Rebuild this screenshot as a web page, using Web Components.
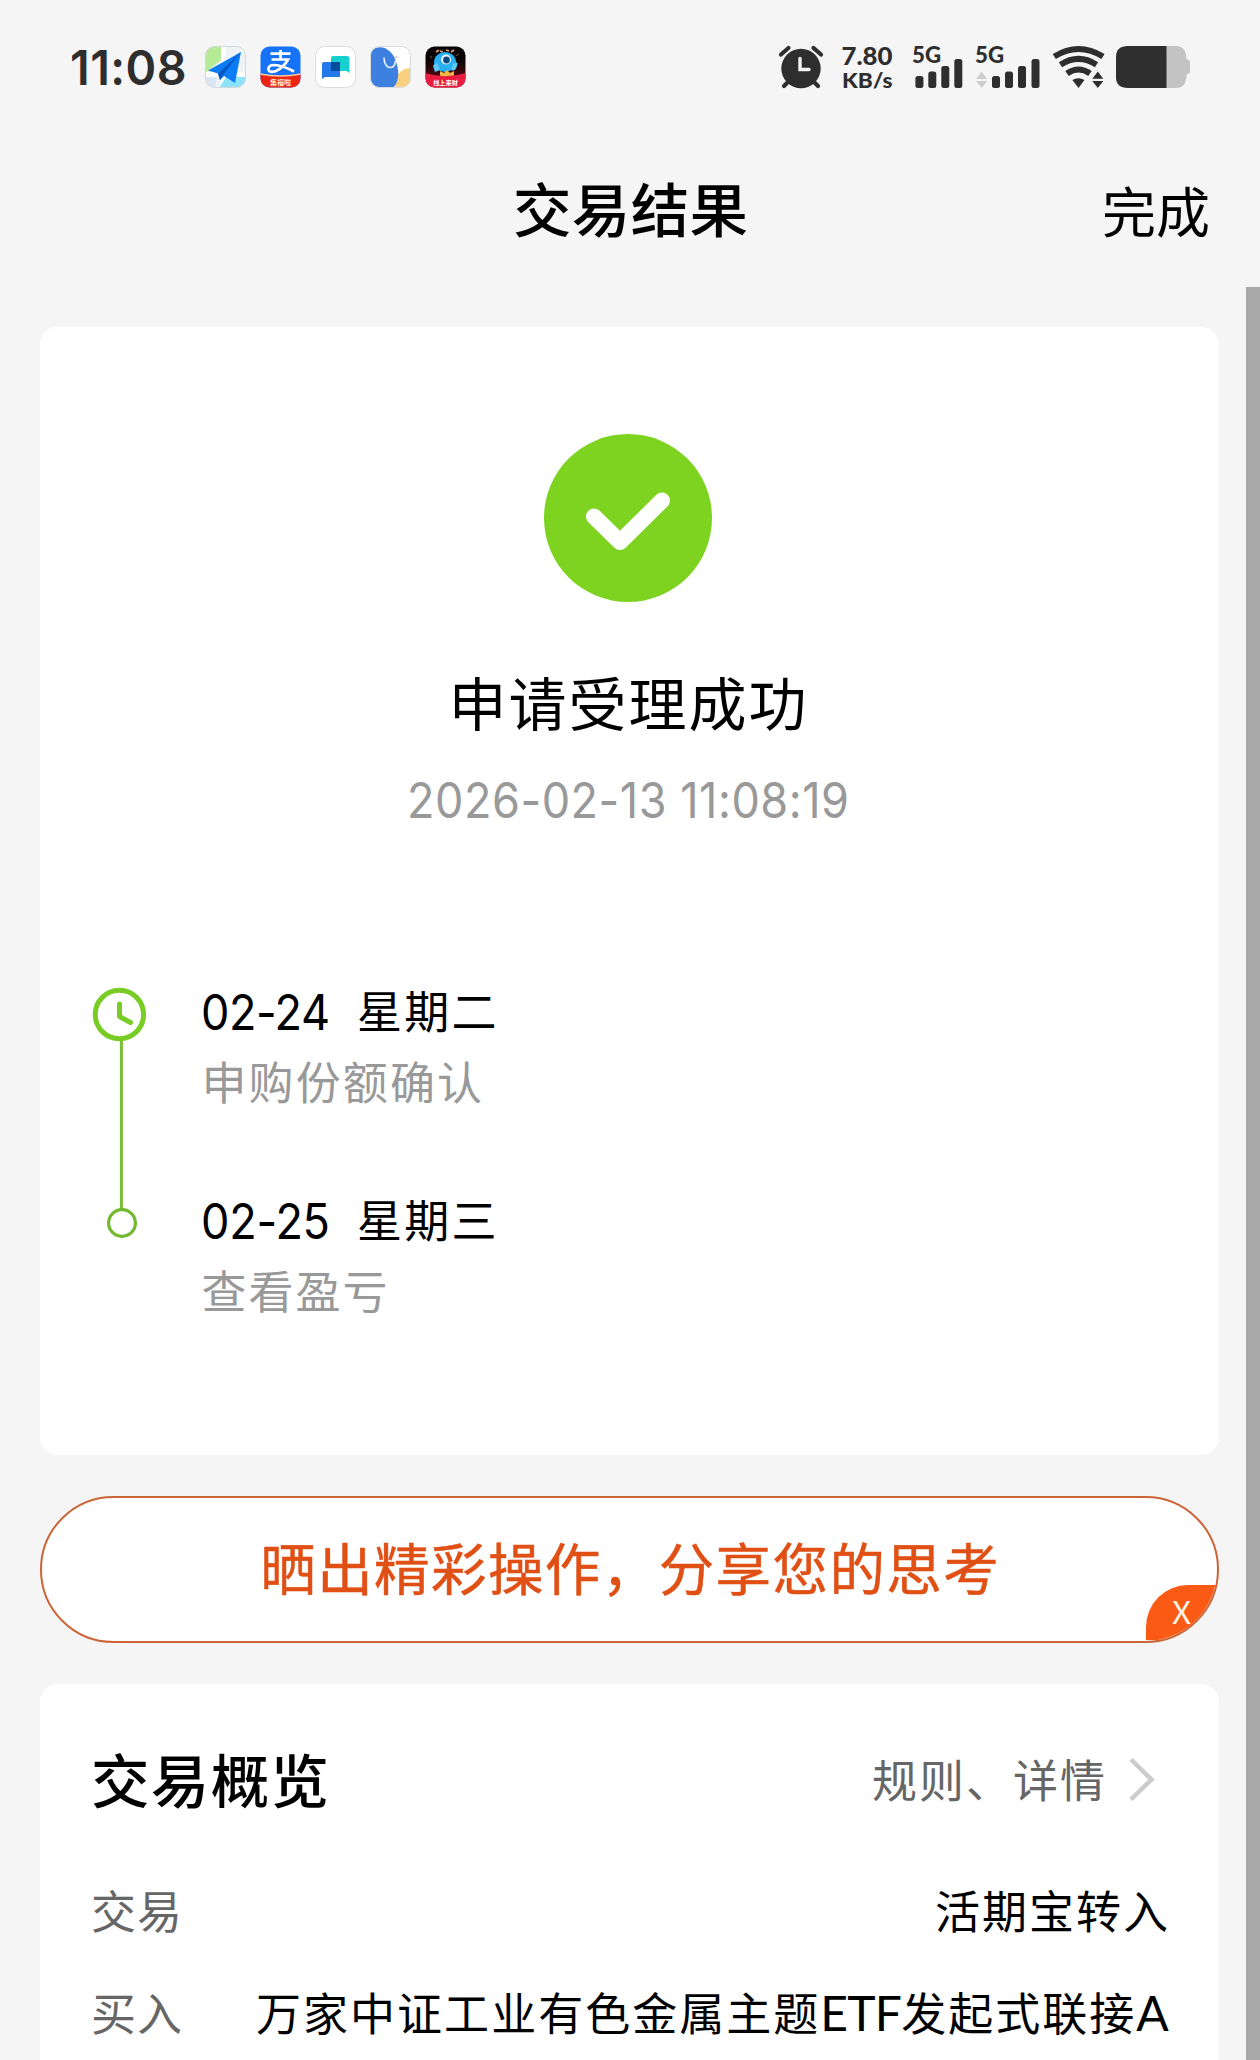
<!DOCTYPE html>
<html lang="zh-CN">
<head>
<meta charset="utf-8">
<title>交易结果</title>
<style>
html,body{margin:0;padding:0;background:#f5f5f5}
body{font-family:Inter,"Noto Sans CJK SC",sans-serif;color:#000;width:1260px;height:2060px;overflow:hidden}
</style>
</head>
<body>
<result-page></result-page>
<script>
const define = (name, html, extra) => {
  const t = document.createElement('template');
  t.innerHTML = html;
  customElements.define(name, class extends HTMLElement {
    constructor() {
      super();
      this.attachShadow({mode: 'open'}).appendChild(t.content.cloneNode(true));
    }
    connectedCallback() { if (extra) extra.call(this); }
  });
};

/* One line of text, tracked so that it spans exactly `w` pixels.
   `n` overrides the number of tracked characters, `dy` nudges the baseline,
   `sx` condenses the glyphs horizontally. */
define('fit-text', `<style>
:host{display:block;white-space:pre;flex:none}
span{display:inline-block;transform-origin:0 50%}
</style><span><slot></slot></span>`, function () {
  const s = this.shadowRoot.querySelector('span');
  const w = +this.getAttribute('w');
  const sx = +this.getAttribute('sx') || 1;
  this.style.width = w + 'px';
  this.style.fontSize = this.getAttribute('size') + 'px';
  this.style.lineHeight = this.getAttribute('lh') + 'px';
  const n = +this.getAttribute('n') || [...this.textContent].length;
  const gap = (w / sx - s.getBoundingClientRect().width) / Math.max(1, n - 1);
  s.style.letterSpacing = gap + 'px';
  s.style.marginRight = -gap + 'px';
  const dy = this.hasAttribute('dy') ? +this.getAttribute('dy') : 1.5;
  if (dy || sx !== 1) s.style.transform = `translateY(${dy}px) scaleX(${sx})`;
});

define('app-icons', `<style>
:host{display:flex;gap:13.9px}
svg{display:block;width:41px;height:42px;flex:none}
text{font-family:"Noto Sans CJK SC",sans-serif}
</style>
<svg viewBox="0 0 41 42"><defs><clipPath id="c"><rect x=".5" y=".5" width="40" height="41" rx="9"/></clipPath></defs>
 <g clip-path="url(#c)"><rect width="41" height="42" fill="#eef4f6"/><path d="M0 0H16V14L0 27Z" fill="#b5ea96"/><path d="M16 0h5v42h-5zM0 26h41v5H0z" fill="#fff"/><path d="M21 31H41V42H14Z" fill="#8fe2fb"/><path d="M0 31h12L10 42H0z" fill="#d9e6f5"/>
 <path d="M36 6 3 24.500 13 27.500 15 34 19 30 30 37Z" fill="#0a7cf8"/><path d="M36 6 13 27.500 15 34 18 29Z" fill="#0858c4"/></g>
 <rect x=".5" y=".5" width="40" height="41" rx="9" fill="none" stroke="#d4d8da"/></svg>
<svg viewBox="0 0 41 42"><defs><clipPath id="c"><rect y=".5" width="41" height="41" rx="9"/></clipPath></defs>
 <g clip-path="url(#c)"><rect width="41" height="42" fill="#1672f6"/><path d="M0 28Q20 32 41 28V42H0Z" fill="#ee2413"/><path d="M0 28Q20 32 41 28" fill="none" stroke="#ffc9a0" stroke-width="1.300"/>
 <path d="M10.500 7.700H30.500M20.500 4V13.500M11.500 13.500H28Q24 21 16 25Q10 27.500 8.300 23.500Q8.300 19 14 19Q23 19.500 34 25.500" fill="none" stroke="#fff" stroke-width="2.700"/>
 <text x="20.500" y="38.700" font-size="7" font-weight="700" fill="#ffe9c8" text-anchor="middle">集福啦</text></g></svg>
<svg viewBox="0 0 41 42"><rect x=".5" y=".5" width="40" height="41" rx="9" fill="#fff" stroke="#dcdcdc"/>
 <path d="M18 10h14q2.500 0 2.500 2.500V27l-3-2H16V12q0-2 2-2z" fill="#16cfcf"/><path d="M9 16h16v15H10l-3 2V18q0-2 2-2z" fill="#2478e8"/><path d="M16 16h9v9h-9z" fill="#074b9c"/></svg>
<svg viewBox="0 0 41 42"><defs><clipPath id="c"><rect x=".5" y=".5" width="40" height="41" rx="9"/></clipPath></defs>
 <g clip-path="url(#c)"><rect width="41" height="42" fill="#fff"/><ellipse cx="41" cy="37" rx="16" ry="15" fill="#f8d080"/><path d="M0 6C9-3 20 2 25 13C30 25 29 36 23 42H0Z" fill="#3d80df"/></g>
 <path d="M14 11.500C14 17 16.500 21.500 20.500 21.500C25 21.500 25 17 25.500 15" fill="none" stroke="#e8f2ff" stroke-width="1.600"/><path d="M24 12.500q1.500-3 3.500-1" fill="none" stroke="#999" stroke-width=".9"/>
 <rect x=".5" y=".5" width="40" height="41" rx="9" fill="none" stroke="#d8dce0"/></svg>
<svg viewBox="0 0 41 42"><defs><clipPath id="c"><rect y=".5" width="41" height="41" rx="9"/></clipPath><linearGradient id="g" x2="0" y2="1"><stop offset=".3" stop-color="#080304"/><stop offset="1" stop-color="#7a0c18"/></linearGradient></defs>
 <g clip-path="url(#c)"><rect width="41" height="42" fill="url(#g)"/>
 <path d="M11 6l3-2M15 5l3 1M21 4l3 1M26 6l3-2" stroke="#d8a070" stroke-width="1.800"/><path d="M31 10l3-2M5 12l2-2" stroke="#5a3a30" stroke-width="1.400"/>
 <ellipse cx="20" cy="16" rx="11" ry="10" fill="#29aef0"/><path d="M8 20q2-4 5-2l2 6-5 2zM28 18q6-4 4 2t-6 4z" fill="#5cc8f5"/><circle cx="21" cy="13.500" r="5" fill="#f0faff"/><circle cx="21.500" cy="14" r="3.400" fill="#0d4a80"/>
 <path d="M15 25l4 2 3-3 3 3 4-2v8H15z" fill="#f3b544"/>
 <path d="M0 27Q20 33.500 41 27V42H0Z" fill="#ea1d40"/><text x="20.500" y="38.500" font-size="6.200" font-weight="700" fill="#fff" text-anchor="middle">线上来财</text></g></svg>`);

define('system-icons', `<style>
:host{display:flex;align-items:flex-start;color:#2e2e2e}
svg{display:block;flex:none;height:42px;overflow:visible}
text{font-family:Lato,sans-serif;font-weight:900}
.net{margin-left:15px}.s1{margin-left:20px}.s2{margin-left:13px}.wifi{margin-left:12px}.bat{margin-left:11px}
</style>
<svg width="46" viewBox="778 46 46 42" fill="#2e2e2e"><circle cx="801" cy="68.500" r="19.700"/><path d="M781 54.500l7.500-6.500M821 54.500l-7.500-6.500M784 86l6-6M818 86l-6-6" stroke="#2e2e2e" stroke-width="4.200" stroke-linecap="round"/><path d="M800 58.500V69.500H809" fill="none" stroke="#f4f4f4" stroke-width="3.400" stroke-linecap="round"/></svg>
<svg class="net" width="54" viewBox="839 46 54 42" fill="currentColor"><text x="841.500" y="64.700" font-size="25" textLength="51" lengthAdjust="spacingAndGlyphs">7.80</text><text x="842" y="87.600" font-size="20.500" textLength="50.500" lengthAdjust="spacingAndGlyphs">KB/s</text></svg>
<svg class="s1" width="50" viewBox="913 46 50 42" fill="currentColor"><text x="912" y="62.700" font-size="22.500" textLength="29" lengthAdjust="spacingAndGlyphs">5G</text><rect x="915.400" y="76" width="8" height="12" rx="2.500"/><rect x="928.300" y="71.500" width="8" height="16.500" rx="2.500"/><rect x="941.300" y="66" width="8" height="22" rx="2.500"/><rect x="954.300" y="59" width="8" height="29" rx="2.500"/></svg>
<svg class="s2" width="64" viewBox="976 46 64 42" fill="currentColor"><text x="975" y="62.700" font-size="22.500" textLength="29" lengthAdjust="spacingAndGlyphs">5G</text><path d="M976 79l5.600-7.300 5.600 7.300zM976 81l5.600 7 5.600-7z" fill="#cdcdcd"/><rect x="992" y="76" width="8" height="12" rx="2.500"/><rect x="1005" y="71.500" width="8" height="16.500" rx="2.500"/><rect x="1018" y="66" width="8" height="22" rx="2.500"/><rect x="1031.500" y="59" width="8" height="29" rx="2.500"/></svg>
<svg class="wifi" width="53" viewBox="1052 46 53 42" fill="none" stroke="currentColor" stroke-width="6"><path d="M1054.300 56.500Q1078.500 41.500 1103 56.500"/><path d="M1060.500 64.800Q1078.500 53 1096.500 64.800"/><path d="M1067 73.500Q1078.500 65.500 1090 73.500"/><path d="M1072.300 80Q1078.500 76.500 1084.500 80L1078.500 88Z" fill="currentColor" stroke="none"/><path d="M1092.300 78.700l5.500-7.200 5.500 7.200zM1092.300 81l5.500 7 5.500-7z" fill="currentColor" stroke="none"/></svg>
<svg class="bat" width="75" viewBox="1116 46 75 42"><path d="M1166 46h10q10 0 10.500 13q3.500 .5 3.500 3.500v8.500q0 3-3.500 3.500Q1186.500 88 1176 88h-10z" fill="#c3c3c3"/><path d="M1166.500 46H1128q-12 0-12 11v20q0 11 12 11h38.500z" fill="#2e2e2e"/></svg>`);

define('status-bar', `<style>
:host{display:flex;height:131px;padding:46px 69px 0 70px;box-sizing:border-box;align-items:flex-start}
fit-text{font-weight:600;color:#2e2e2e}
app-icons{margin-left:18.500px}
system-icons{margin-left:auto}
</style><fit-text w="116.500" size="48.500" lh="43" dy="0" sx=".96">11:08</fit-text><app-icons></app-icons><system-icons></system-icons>`);

define('nav-header', `<style>
:host{display:grid;grid-template-columns:1fr auto 1fr;height:156px;align-items:center;padding:0 50px 0 51px}
.t{font-weight:500}.d{justify-self:end;padding-top:5px}
</style><i></i><fit-text class="t" w="235" size="58.500" lh="80">交易结果</fit-text><fit-text class="d" w="108" size="54" lh="70" dy="2">完成</fit-text>`);

define('white-card', `<style>
:host{display:flex;flex-direction:column;background:#fff;border-radius:18px;box-sizing:border-box}
</style><slot></slot>`);

define('success-badge', `<style>:host{display:block;width:168px;height:168px}svg{display:block}</style>
<svg width="168" height="168" viewBox="0 0 168 168"><circle cx="84" cy="84" r="84" fill="#7ed321"/><path d="M50 82.500 76 108 118 66.500" fill="none" stroke="#fff" stroke-width="16" stroke-linecap="round" stroke-linejoin="round"/></svg>`);

define('time-line', `<style>
:host{display:flex}
svg{display:block;flex:none}
.items{display:flex;flex-direction:column;gap:84.500px;margin-left:53px}
.row{display:flex;gap:27px}
.sub{color:#999;margin:16.500px 0 0 .5px}
</style>
<svg width="56" height="256" viewBox="92 984 56 256" fill="none"><path d="M121.400 1040V1209" stroke="#76bd38" stroke-width="3"/><circle cx="119.400" cy="1014.500" r="24.200" stroke="#78cc24" stroke-width="5"/><path d="M119.500 1004V1016.500L130.500 1022.500" stroke="#78cc24" stroke-width="5" stroke-linecap="round" stroke-linejoin="round"/><circle cx="122" cy="1223" r="13.400" stroke="#72b92f" stroke-width="3.200"/></svg>
<div class="items">
<div><div class="row"><fit-text w="129" size="49.500" lh="54" dy=".5" sx=".91">02-24</fit-text><fit-text w="139.500" size="45" lh="54">星期二</fit-text></div><fit-text class="sub" w="280.500" size="45" lh="54">申购份额确认</fit-text></div>
<div><div class="row"><fit-text w="129" size="49.500" lh="54" dy=".5" sx=".91">02-25</fit-text><fit-text w="139.500" size="45" lh="54">星期三</fit-text></div><fit-text class="sub" w="186" size="45" lh="54">查看盈亏</fit-text></div>
</div>`);

define('share-pill', `<style>
:host{display:flex;position:relative;overflow:hidden;box-sizing:border-box;height:147px;border:2px solid #cb6537;border-radius:73.500px;background:#fff;align-items:center;justify-content:center;color:#e04f14}
.m{-webkit-text-stroke:.5px #e04f14}
.x{position:absolute;right:0;bottom:1px;width:71px;height:55px;box-sizing:border-box;padding:8px 0 0 26px;background:#fa5a14;border-radius:42px 0 0 0;color:#fff3e4;font-family:"Noto Sans CJK SC",sans-serif}
</style><fit-text class="m" w="738.500" size="55.500" lh="80" dy="-.5">晒出精彩操作，分享您的思考</fit-text><div class="x"><fit-text w="19" size="31" lh="38" dy="-1" sx="1.08">X</fit-text></div>`);

define('overview-head', `<style>
:host{display:flex;align-items:center;height:80px}
.t{font-weight:500}.m{margin-left:auto;color:#666}
svg{margin:0 13px 0 24px;display:block}
</style><fit-text class="t" w="238" size="58.500" lh="80">交易概览</fit-text><fit-text class="m" w="233" size="45" lh="60">规则、详情</fit-text><svg width="26" height="46" viewBox="0 0 26 46"><path d="M2 2.500 22.500 22.500 2 42.500" fill="none" stroke="#ccc" stroke-width="4.500"/></svg>`);

define('detail-row', `<style>
:host{display:flex;justify-content:space-between;align-items:center;height:60px}
</style><slot name="k"></slot><slot name="v"></slot>`);

define('scroll-thumb', `<style>:host{display:block;width:14px;background:#a8a8a8;flex:none}</style>`);

define('result-page', `<style>
:host{display:flex;flex-direction:column;width:1260px;height:2060px;overflow:hidden;background:#f5f5f5}
.body{display:flex;flex:1;min-height:0}
main{display:flex;flex-direction:column;width:1179px;padding:40px 27px 0 40px;gap:41px;flex:none}
.result{height:1128px;padding:107px 3px 0 0;align-items:center;flex:none}
.h{margin:66px 1px 0 0}
.date{margin-top:32px;color:#999}
time-line{align-self:flex-start;margin:154px 0 0 52px}
share-pill,.overview{flex:none}
.overview{padding:56px 51px 0;height:420px}
.r1{margin-top:61px}.r2{margin-top:41.500px}
.k{color:#666}
.l{font-family:Lato,sans-serif;font-size:48px;line-height:1px;letter-spacing:-.8px}
</style>
<status-bar></status-bar><nav-header></nav-header>
<div class="body"><main>
<white-card class="result"><success-badge></success-badge>
<fit-text class="h" w="358" size="58" lh="70">申请受理成功</fit-text>
<fit-text class="date" w="442" size="49.500" lh="60" dy="0" sx=".91">2026-02-13 11:08:19</fit-text>
<time-line></time-line></white-card>
<share-pill></share-pill>
<white-card class="overview"><overview-head></overview-head>
<detail-row class="r1"><fit-text slot="k" class="k" w="91" size="45" lh="60" dy="2">交易</fit-text><fit-text slot="v" w="233" size="45" lh="60" dy="2">活期宝转入</fit-text></detail-row>
<detail-row class="r2"><fit-text slot="k" class="k" w="91" size="45" lh="60">买入</fit-text><fit-text slot="v" w="912" n="18" size="45" lh="60">万家中证工业有色金属主题<span class="l">ETF</span>发起式联接<span class="l">A</span></fit-text></detail-row>
</white-card>
</main><scroll-thumb></scroll-thumb></div>`);
</script>
</body>
</html>
